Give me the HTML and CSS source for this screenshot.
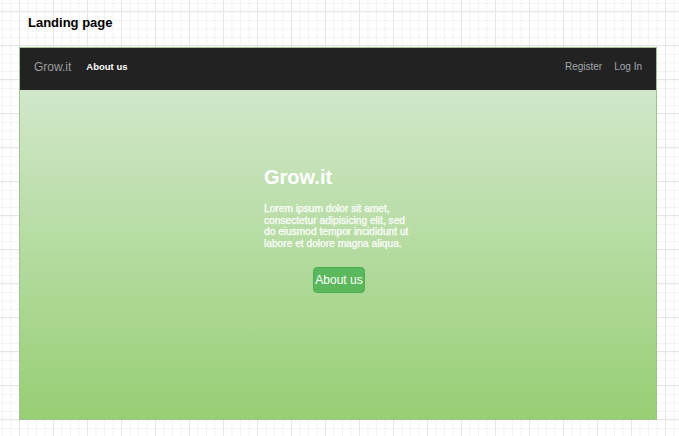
FILE: index.html
```html
<!DOCTYPE html>
<html>
<head>
<meta charset="utf-8">
<link rel="stylesheet" href="styles.css">
</head>
<body>
<div class="page">
  <h1 class="page-title">Landing page</h1>
  <div class="frame">
    <nav class="navbar">
      <div class="nav-left">
        <span class="brand">Grow.it</span>
        <a class="nav-link active">About us</a>
      </div>
      <div class="nav-right">
        <a class="nav-link">Register</a>
        <a class="nav-link">Log In</a>
      </div>
    </nav>
    <section class="hero">
      <div class="hero-content">
        <h2 class="hero-title">Grow.it</h2>
        <p class="hero-text">Lorem ipsum dolor sit amet, consectetur adipisicing elit, sed do eiusmod tempor incididunt ut labore et dolore magna aliqua.</p>
        <div class="hero-actions">
          <button class="btn">About us</button>
        </div>
      </div>
    </section>
  </div>
</div>
</body>
</html>
```
FILE: styles.css
```css
html, body {
  margin: 0;
  padding: 0;
  height: 100%;
}
body {
  font-family: "Liberation Sans", Arial, sans-serif;
  background-color: #ffffff;
  background-image:
    linear-gradient(to right, #e6e6e6 1px, transparent 1px),
    linear-gradient(to bottom, #e6e6e6 1px, transparent 1px),
    linear-gradient(to right, #f3f3f3 1px, transparent 1px),
    linear-gradient(to bottom, #f3f3f3 1px, transparent 1px);
  background-size: 34px 34px, 34px 34px, 8.5px 8.5px, 8.5px 8.5px;
  background-position: 19px 11px, 19px 11px, 2px 3px, 2px 3px;
}
.page {
  padding: 15px 0 0 19px;
  width: 638px;
}
.page-title {
  margin: 0 0 0 9px;
  font-size: 13px;
  line-height: 16px;
  font-weight: bold;
  color: #000;
}
.frame {
  margin-top: 16px;
  border: 1px solid #a3bf95;
  display: flex;
  flex-direction: column;
}
.navbar {
  height: 42px;
  box-sizing: border-box;
  background: #222222;
  display: flex;
  align-items: center;
  justify-content: space-between;
  padding: 0 14px 5px 14px;
}
.nav-left, .nav-right {
  display: flex;
  align-items: center;
}
.brand {
  color: #9d9d9d;
  font-size: 12px;
  margin-right: 15px;
}
.nav-link {
  color: #a3a8ad;
  font-size: 10px;
  text-decoration: none;
}
.nav-link.active {
  color: #ffffff;
  font-weight: bold;
  font-size: 9.5px;
}
.nav-right .nav-link + .nav-link {
  margin-left: 12px;
}
.hero {
  height: 329px;
  background: linear-gradient(to bottom, #d1e7ca 0%, #97cf74 100%);
  display: flex;
  justify-content: center;
}
.hero-content {
  width: 150px;
  padding-top: 75px;
  margin-left: 2px;
}
.hero-title {
  margin: 0;
  font-size: 20px;
  line-height: 24px;
  font-weight: bold;
  color: #ffffff;
}
.hero-text {
  margin: 14px 0 0 0;
  font-size: 10.2px;
  line-height: 11.7px;
  color: #ffffff;
  -webkit-text-stroke: 0.25px #ffffff;
}
.hero-actions {
  display: flex;
  justify-content: center;
  margin-top: 17px;
}
.btn {
  font-family: "Liberation Sans", Arial, sans-serif;
  font-size: 12px;
  color: #ffffff;
  background: #5cb85c;
  border: 1px solid #4cae4c;
  border-radius: 4px;
  height: 26px;
  padding: 0 1px;
  line-height: 24px;
}
```
